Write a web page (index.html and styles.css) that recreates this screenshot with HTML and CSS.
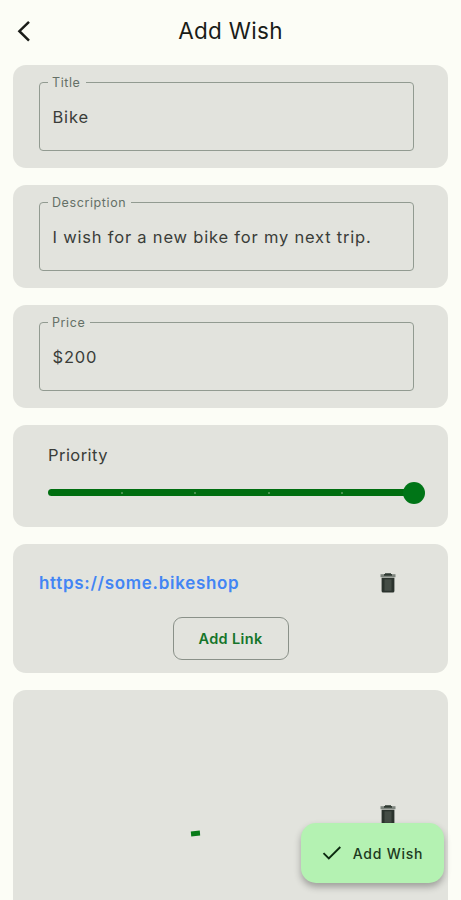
FILE: index.html
```html
<!DOCTYPE html>
<html lang="en">
<head>
    <meta charset="UTF-8">
    <meta name="viewport" content="width=device-width, initial-scale=1.0">
    <title>Add Wish</title>
    <link rel="stylesheet" href="styles.css">
</head>
<body>
    <header class="app-bar">
        <button class="back-button" aria-label="Back">
            <svg width="14" height="22" viewBox="0 0 14 22"><path d="M12 1.8L2.4 11.2L12 20.6" fill="none" stroke="#1a1c18" stroke-width="2.5"/></svg>
        </button>
        <h1>Add Wish</h1>
    </header>
    <main class="form">
        <section class="card">
            <fieldset class="field">
                <legend>Title</legend>
                <input type="text" value="Bike">
            </fieldset>
        </section>
        <section class="card">
            <fieldset class="field">
                <legend>Description</legend>
                <input type="text" value="I wish for a new bike for my next trip.">
            </fieldset>
        </section>
        <section class="card">
            <fieldset class="field">
                <legend>Price</legend>
                <input type="text" value="$200">
            </fieldset>
        </section>
        <section class="card priority-card">
            <p class="priority-label">Priority</p>
            <div class="slider">
                <span class="tick"></span>
                <span class="tick"></span>
                <span class="tick"></span>
                <span class="tick"></span>
                <span class="thumb"></span>
            </div>
        </section>
        <section class="card link-card">
            <div class="link-row">
                <a class="link" href="#">https://some.bikeshop</a>
                <button class="delete-button" aria-label="Delete link">
                    <svg width="16" height="20" viewBox="0 0 16 20"><path d="M5 0.3h6v1.7h-6z" fill="#1f2a22"/><path d="M0.5 1.2h15v3h-15z" fill="#7d847d"/><path d="M4 1.2h8v1.4h-8z" fill="#1f2a22"/><path d="M1.6 4.8h12.8v13.2a1.5 1.5 0 0 1-1.5 1.5h-9.8a1.5 1.5 0 0 1-1.5-1.5z" fill="#2b332d"/><path d="M4.5 6.3h7v11.5h-7z" fill="#444c45"/></svg>
                </button>
            </div>
            <button class="add-link">Add Link</button>
        </section>
        <section class="card image-card">
            <div class="image-slot"><span class="loader"></span></div>
            <button class="delete-button" aria-label="Delete image">
                <svg width="16" height="20" viewBox="0 0 16 20"><path d="M5 0.3h6v1.7h-6z" fill="#1f2a22"/><path d="M0.5 1.2h15v3h-15z" fill="#7d847d"/><path d="M4 1.2h8v1.4h-8z" fill="#1f2a22"/><path d="M1.6 4.8h12.8v13.2a1.5 1.5 0 0 1-1.5 1.5h-9.8a1.5 1.5 0 0 1-1.5-1.5z" fill="#2b332d"/><path d="M4.5 6.3h7v11.5h-7z" fill="#444c45"/></svg>
            </button>
        </section>
    </main>
    <button class="fab">
        <svg width="20" height="16" viewBox="0 0 20 16"><path d="M1.5 8.2L6.8 13.5L18.3 2" fill="none" stroke="#0c2a10" stroke-width="1.9"/></svg>
        Add Wish
    </button>
</body>
</html>
```

FILE: styles.css
```css
* {
    box-sizing: border-box;
}
body {
    margin: 0;
    height: 900px;
    overflow: hidden;
    background-color: #fcfdf6;
    color: #1a1c18;
    font-family: Inter, "Liberation Sans", sans-serif;
}
button {
    padding: 0;
    border: none;
    background: none;
    font-family: inherit;
    cursor: pointer;
}
.app-bar {
    display: grid;
    grid-template-columns: 48px 1fr 48px;
    align-items: center;
    height: 65px;
    padding-bottom: 4px;
}
.back-button {
    display: flex;
    padding-left: 17px;
}
h1 {
    margin: 0;
    font-size: 22.5px;
    font-weight: 400;
    letter-spacing: 0.3px;
    text-align: center;
}
.form {
    display: flex;
    flex-direction: column;
    gap: 17px;
    padding: 0 13px;
}
.card {
    height: 103px;
    flex: none;
    padding: 10px 34px 0 26px;
    background-color: #e2e3dd;
    border-radius: 13px;
}
.field {
    height: 76px;
    margin: 0;
    padding: 0;
    min-width: 0;
    border: 1px solid #929b91;
    border-radius: 4px;
}
.field legend {
    margin-left: 8px;
    padding: 1px 5px 0 4px;
    font-size: 12.5px;
    line-height: 14px;
    letter-spacing: 0.6px;
    color: #657067;
}
.field input {
    display: block;
    width: 100%;
    height: 40px;
    margin-top: 7px;
    padding: 0 12.5px;
    border: none;
    outline: none;
    background: none;
    font-family: inherit;
    font-size: 16.5px;
    letter-spacing: 0.8px;
    color: #3a3d39;
}
.priority-card {
    height: 102px;
    padding: 18px 34px 0 35px;
}
.priority-label {
    margin: 0 0 22px;
    font-size: 16.5px;
    line-height: 24px;
    letter-spacing: 0.45px;
    color: #3a3d39;
}
.slider {
    display: flex;
    align-items: center;
    justify-content: space-between;
    height: 7px;
    margin-right: -11px;
    padding-left: 73px;
    background: linear-gradient(#006e10, #006e10) no-repeat 0 0 / 360px 7px;
    border-radius: 4px;
}
.tick {
    width: 2px;
    height: 2px;
    border-radius: 50%;
    background-color: #5f9f62;
}
.thumb {
    width: 22px;
    height: 22px;
    margin-left: -11px;
    border-radius: 50%;
    background-color: #007517;
}
.link-card {
    display: flex;
    flex-direction: column;
    align-items: center;
    height: 129px;
    padding: 19px 26px 0;
}
.link-row {
    display: flex;
    align-items: center;
    justify-content: space-between;
    width: 100%;
    height: 40px;
    padding-right: 26px;
}
.link {
    font-size: 17px;
    font-weight: 600;
    letter-spacing: 0.7px;
    text-decoration: none;
    color: #4285f4;
}
.delete-button {
    display: flex;
}
.add-link {
    width: 116px;
    height: 43px;
    margin-top: 14px;
    border: 1px solid #8a9189;
    border-radius: 9px;
    font-size: 14.5px;
    font-weight: 600;
    letter-spacing: 0.35px;
    color: #15752a;
}
.image-card {
    display: flex;
    align-items: center;
    justify-content: space-between;
    height: 250px;
    padding: 0 52px 0 26px;
}
.image-slot {
    display: flex;
    justify-content: center;
    width: 312px;
    padding-top: 36px;
}
.loader {
    width: 9px;
    height: 5px;
    background-color: #087b18;
    transform: rotate(-5deg);
}
/* floats over the bottom of the form */
.fab {
    position: absolute;
    right: 17px;
    bottom: 17px;
    display: flex;
    align-items: center;
    justify-content: center;
    gap: 11px;
    width: 143px;
    height: 60px;
    border-radius: 15px;
    background-color: #b4f2b2;
    box-shadow: 0 4px 7px rgba(0, 0, 0, 0.3);
    font-size: 14px;
    font-weight: 500;
    letter-spacing: 0.75px;
    color: #1d3a20;
}
```
